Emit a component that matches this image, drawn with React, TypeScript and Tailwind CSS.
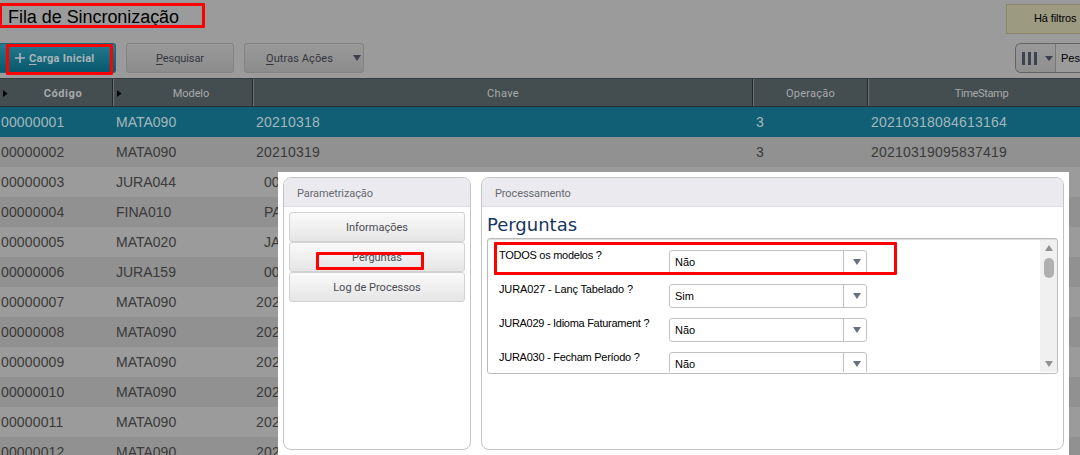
import React from "react";

const rows: [string, string, string, boolean, string, string][] = [
  ["00000001", "MATA090", "20210318", false, "3", "20210318084613164"],
  ["00000002", "MATA090", "20210319", false, "3", "20210319095837419"],
  ["00000003", "JURA044", "00000001", true, "", ""],
  ["00000004", "FINA010", "PA", true, "", ""],
  ["00000005", "MATA020", "JA", true, "", ""],
  ["00000006", "JURA159", "00000001", true, "", ""],
  ["00000007", "MATA090", "20210320", false, "", ""],
  ["00000008", "MATA090", "20210320", false, "", ""],
  ["00000009", "MATA090", "20210320", false, "", ""],
  ["00000010", "MATA090", "20210320", false, "", ""],
  ["00000011", "MATA090", "20210320", false, "", ""],
  ["00000012", "MATA090", "20210320", false, "", ""],
];

const questions = [
  ["TODOS os modelos ?", "Não", "tracking-[-0.27px]"],
  ["JURA027 - Lanç Tabelado ?", "Sim", "tracking-[-0.14px]"],
  ["JURA029 - Idioma Faturament ?", "Não", "tracking-[-0.28px]"],
  ["JURA030 - Fecham Período ?", "Não", "tracking-[-0.26px]"],
];

const cols = "grid grid-cols-[113px_140px_500px_115px_212px]";

function Triangle({ className, up = false }: { className: string; up?: boolean }) {
  return (
    <svg className={className} viewBox="0 0 8 6" preserveAspectRatio="none" fill="currentColor">
      <path d={up ? "M0 6L4 0L8 6Z" : "M0 0H8L4 6Z"} />
    </svg>
  );
}

function HeaderCell({ label, marker, className }: { label: string; marker?: boolean; className: string }) {
  return (
    <div className={"relative flex items-center justify-center border-r border-r-[#25292b] border-l border-l-[#6b7375] pt-[3px] first:border-l-0 last:border-r-0 " + className}>
      {marker && (
        <svg className="absolute left-[3px] top-[11px] h-[7px] w-[5px]" viewBox="0 0 5 7">
          <path d="M0 0L4.5 3.5L0 7Z" fill="#000" />
        </svg>
      )}
      <span>{label}</span>
    </div>
  );
}

function Select({ value }: { value: string }) {
  return (
    <div className="flex h-6 w-[198px] rounded-[3px] border border-[#c0c2c5] bg-white">
      <span className="flex-1 pl-[5px] leading-[22px]">{value}</span>
      <span className="flex w-[23px] items-center justify-center border-l border-[#c0c2c5] pl-[3px]">
        <Triangle className="h-[6px] w-[8px] text-[#687080]" />
      </span>
    </div>
  );
}

function SideButton({ children }: { children: React.ReactNode }) {
  return (
    <button className="flex h-[30px] w-full items-center justify-center rounded-[3px] border border-[#d2d2d2] bg-linear-to-b from-[#fafafa] to-[#e5e5e5] pt-[2px] font-[Roboto,sans-serif] text-[11px] text-[#4a4c52]">
      {children}
    </button>
  );
}

export default function App() {
  return (
    <div className="relative h-[455px] w-[1080px] overflow-hidden bg-[#9b9b9b] font-['Liberation_Sans',Arial,sans-serif] text-[11px] text-black">
      <header className="flex h-[43px] items-start justify-between">
        <h1 className="whitespace-nowrap pl-2 pt-[4px] text-[18px] leading-[26px] tracking-[-0.05px]">Fila de Sincronização</h1>
        <div className="mt-1 h-[30px] w-[74px] whitespace-nowrap border border-r-0 border-[#85866c] bg-[#9c9b82] pl-[27px] leading-[27px] tracking-[-0.1px]">
          Há filtros
        </div>
      </header>

      <div className="flex h-[35px] items-start font-[Roboto,sans-serif] text-[#34363e]">
        <button className="flex h-[30px] w-[116px] items-center rounded-r-[3px] border border-l-0 border-[#176679] bg-linear-to-b from-[#247a8c] to-[#07586e] pl-[15px] font-bold tracking-[0.3px] text-[#a9b5b9]">
          <svg className="mr-[4px] h-[10px] w-[10px]" viewBox="0 0 10 10">
            <path d="M5 0V10M0 5H10" stroke="currentColor" strokeWidth="1.6" />
          </svg>
          <span className="pt-[2px]"><u className="underline-offset-2">C</u>arga Inicial</span>
        </button>
        <button className="ml-[10px] h-[30px] w-[108px] rounded-[3px] border border-[#838383] bg-linear-to-b from-[#999] to-[#8c8c8c] pt-[2px] tracking-[-0.1px]">
          <u className="underline-offset-2">P</u>esquisar
        </button>
        <button className="ml-[10px] flex h-[30px] w-[120px] items-center rounded-[3px] border border-[#838383] bg-linear-to-b from-[#999] to-[#8c8c8c] pl-[21px]">
          <span className="pt-[2px] tracking-[0.1px]"><u className="underline-offset-2">O</u>utras Ações</span>
          <Triangle className="ml-auto mr-[2px] h-[6px] w-[8px] text-[#3c404b]" />
        </button>
        <div className="ml-auto flex h-[30px] w-[65px] overflow-hidden rounded-l-[6px] border border-r-0 border-[#616264]">
          <div className="flex w-[40px] shrink-0 items-center border-r border-[#777] bg-linear-to-b from-[#999] to-[#909090] pl-[6px]">
            <svg className="h-[13px] w-[15px]" viewBox="0 0 15 13" fill="#3e434f">
              <path d="M0 0H3V13H0ZM6 0H9V13H6ZM12 0H15V13H12Z" />
            </svg>
            <Triangle className="ml-[8px] h-[5px] w-[8px] text-[#3c404b]" />
          </div>
          <span className="whitespace-nowrap pl-[5px] font-['Liberation_Sans',Arial,sans-serif] leading-[29px] text-black">Pesquisar</span>
        </div>
      </div>

      <div className={cols + " h-[29px] border-y border-t-[#383e40] border-b-[#292e30] bg-[#444e50] font-[Roboto,sans-serif] text-[#a7aaab]"}>
        <HeaderCell label="Código" marker className="pl-[14px] font-bold tracking-[0.6px]" />
        <HeaderCell label="Modelo" marker className="pl-[16px] tracking-[-0.1px]" />
        <HeaderCell label="Chave" className="tracking-[0.4px]" />
        <HeaderCell label="Operação" className="tracking-[0.25px]" />
        <HeaderCell label="TimeStamp" className="pl-[14px] tracking-[-0.35px]" />
      </div>
      {rows.map(([code, model, key, indent, op, stamp], i) => (
        <div
          key={code}
          className={
            cols +
            " h-[30px] pt-px text-[14px] leading-[29px] " +
            (i === 0 ? "bg-[#105f74] text-[#a5b7bc]" : i % 2 ? "bg-[#919191] text-[#3a3a3a]" : "bg-[#9b9b9b] text-[#3a3a3a]")
          }
        >
          <span className="pl-px tracking-[0.15px]">{code}</span>
          <span className="pl-[3px]">{model}</span>
          <span className={indent ? "pl-[11px]" : "pl-[3px] tracking-[0.2px]"}>{key}</span>
          <span className="pl-[3px]">{op}</span>
          <span className="pl-[3px] tracking-[0.22px]">{stamp}</span>
        </div>
      ))}

      <div className="absolute left-[278px] top-[172px] flex h-[283px] w-[791px] gap-[10px] bg-white p-[5px]">
        <section className="h-[273px] w-[188px] overflow-hidden rounded-[8px] border border-[#c3c3c5]">
          <h2 className="h-[29px] border-b border-[#dedee2] bg-[#ebebef] pl-[13px] pt-px font-[Roboto,sans-serif] leading-[30px] tracking-[-0.1px] text-[#68696e]">Parametrização</h2>
          <div className="flex flex-col px-[5px] pt-[5px]">
            <SideButton>Informações</SideButton>
            <SideButton>Perguntas</SideButton>
            <SideButton>Log de Processos</SideButton>
          </div>
        </section>
        <section className="h-[273px] w-[583px] overflow-hidden rounded-[8px] border border-[#c3c3c5]">
          <h2 className="h-[29px] border-b border-[#dedee2] bg-[#ebebef] pl-[13px] pt-px font-[Roboto,sans-serif] leading-[30px] tracking-[-0.1px] text-[#68696e]">Processamento</h2>
          <h3 className="h-[31px] pl-[5px] pt-[3px] font-['DejaVu_Sans',sans-serif] text-[18px] leading-[29px] text-[#17365f]">Perguntas</h3>
          <div className="ml-[5px] flex h-[136px] w-[571px] overflow-hidden rounded-[3px] border border-[#bbb] shadow-[inset_0_1px_0_#ddd]">
            <div className="h-[133px] flex-1 overflow-hidden pl-[11px] pt-[11px]">
              {questions.map(([label, value, tracking]) => (
                <div key={label} className="flex h-[34px]">
                  <span className={"w-[170px] shrink-0 whitespace-nowrap leading-[10px] " + tracking}>{label}</span>
                  <Select value={value} />
                </div>
              ))}
            </div>
            <div className="mt-px flex h-[132px] w-[17px] flex-col items-center bg-[#f0f0f0] pt-[5px]">
              <Triangle up className="h-[6px] w-[8px] text-[#929292]" />
              <div className="mt-[7px] h-5 w-[10px] rounded-full bg-[#b0b0b0]" />
              <Triangle className="mb-[5px] mt-auto h-[6px] w-[8px] text-[#929292]" />
            </div>
          </div>
        </section>
      </div>

      <div className="absolute left-[-1px] top-[3px] h-[25px] w-[206px] rounded-[1px] border-[3px] border-[#ff0000]" />
      <div className="absolute left-[6px] top-[44px] h-[31px] w-[107px] rounded-[1px] border-[3px] border-[#ff0000]" />
      <div className="absolute left-[316px] top-[252px] h-[18px] w-[108px] rounded-[1px] border-[3px] border-[#ff0000]" />
      <div className="absolute left-[494px] top-[242px] h-[33px] w-[403px] rounded-[1px] border-[3px] border-[#ff0000]" />
    </div>
  );
}
